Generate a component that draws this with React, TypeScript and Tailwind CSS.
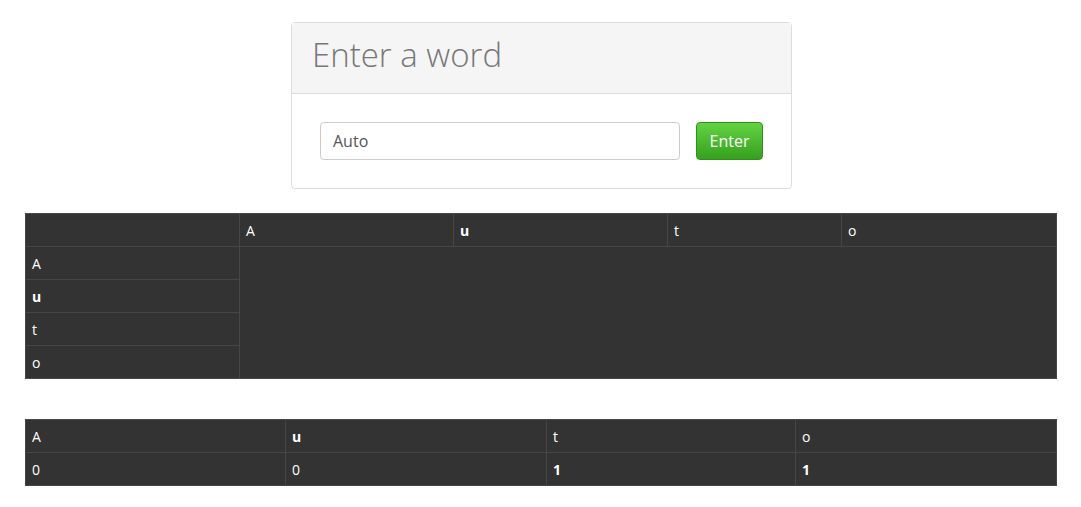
import React from "react";

const word = ["A", "u", "t", "o"];
const counts = ["0", "0", "1", "1"];
const bold = (c: string) => c === "u" || c === "1";

const cell = "h-[33px] border border-[#464646] px-[6px] text-left align-middle";

export default function App() {
  return (
    <div className="min-h-screen bg-white pt-[22px] font-['Open_Sans',sans-serif] text-[14px]">
      <div className="ml-[291px] w-[501px] rounded-[4px] border border-[#dddddd]">
        <div className="h-[71px] border-b border-[#dddddd] bg-[#f5f5f5] px-[20px] pt-[11px]">
          <h1 className="text-[33px] leading-[42px] font-light text-[#777777]">Enter a word</h1>
        </div>
        <div className="flex items-center gap-[16px] px-[28px] py-[28px]">
          <input
            defaultValue="Auto"
            className="h-[38px] w-[360px] rounded-[4px] border border-[#cccccc] px-[12px] text-[16px] text-[#555555] outline-none"
          />
          <button className="h-[38px] w-[67px] rounded-[4px] border border-[#2f8f1c] bg-gradient-to-b from-[#62d341] to-[#36a01d] text-[16px] text-white">
            Enter
          </button>
        </div>
      </div>

      <table className="mx-[25px] mt-[24px] w-[1032px] table-fixed border-collapse bg-[#333333] text-white">
        <colgroup>
          <col className="w-[214px]" />
          <col className="w-[214px]" />
          <col className="w-[214px]" />
          <col className="w-[174px]" />
          <col />
        </colgroup>
        <thead>
          <tr>
            <th className={cell + " font-normal"}></th>
            {word.map((c, i) => (
              <th key={i} className={cell + (bold(c) ? " font-bold" : " font-normal")}>{c}</th>
            ))}
          </tr>
        </thead>
        <tbody>
          {word.map((c, i) => (
            <tr key={i}>
              <td className={cell + (bold(c) ? " font-bold" : "")}>{c}</td>
              {i === 0 && <td colSpan={4} rowSpan={4} className="border-y border-r border-[#464646]"></td>}
            </tr>
          ))}
        </tbody>
      </table>

      <table className="mx-[25px] mt-[40px] w-[1032px] table-fixed border-collapse bg-[#333333] text-white">
        <colgroup>
          <col className="w-[260px]" />
          <col className="w-[261px]" />
          <col className="w-[249px]" />
          <col />
        </colgroup>
        <tbody>
          <tr>
            {word.map((c, i) => (
              <td key={i} className={cell + (bold(c) ? " font-bold" : "")}>{c}</td>
            ))}
          </tr>
          <tr>
            {counts.map((c, i) => (
              <td key={i} className={cell + (bold(c) ? " font-bold" : "")}>{c}</td>
            ))}
          </tr>
        </tbody>
      </table>
    </div>
  );
}
